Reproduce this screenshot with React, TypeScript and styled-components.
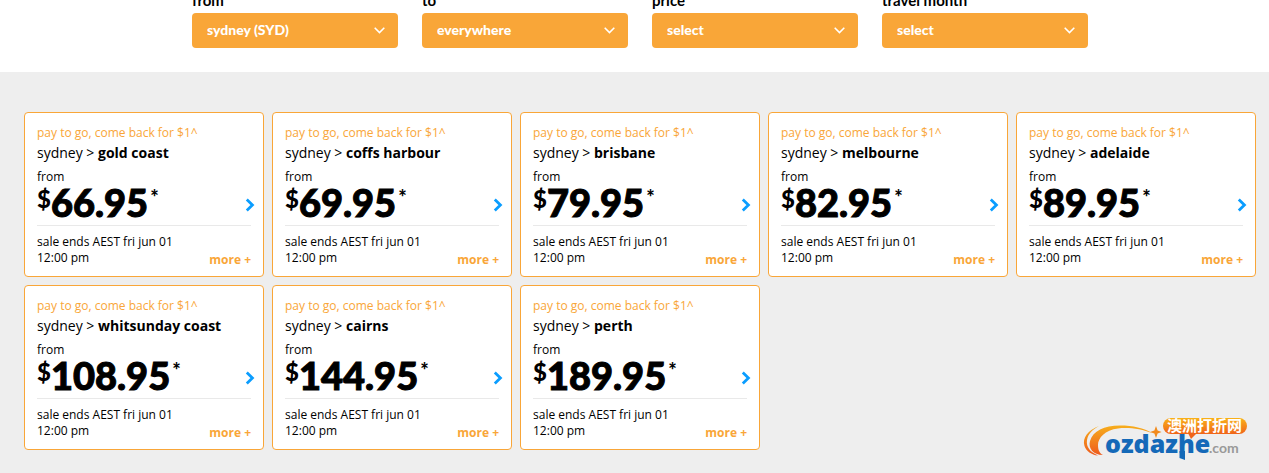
import React from "react";
import styled, { createGlobalStyle } from "styled-components";

const orange = "#f9a638";

const GlobalStyle = createGlobalStyle`
  body {
    margin: 0;
    background: #eeeeee;
    color: #000;
    font-family: "Open Sans", "Noto Sans", sans-serif;
    font-size: 12px;
    line-height: 16px;
  }
  *, *::before, *::after { box-sizing: border-box; }
`;

const Page = styled.div`
  position: relative;
  min-height: 100vh;
`;

const FilterBar = styled.form`
  background: #fff;
  padding: 0 13px 24px 24px;
`;

const Filters = styled.div`
  display: grid;
  grid-template-columns: repeat(4, 1fr);
  gap: 24px;
  max-width: 896px;
  margin: 0 auto;
`;

const Field = styled.div`
  display: flex;
  flex-direction: column;
  margin-top: -10px;
`;

const FieldLabel = styled.label`
  font: 700 15px/20px Lato, sans-serif;
  padding-bottom: 3px;
`;

const SelectWrap = styled.div`
  position: relative;
`;

const Select = styled.select`
  appearance: none;
  display: block;
  width: 100%;
  height: 35px;
  padding: 0 36px 2px 15px;
  border: 0;
  border-radius: 4px;
  background: ${orange};
  color: #fff;
  font: 900 14px/20px Lato, sans-serif;
`;

const SelectArrow = styled.svg`
  position: absolute;
  top: 14px;
  right: 13px;
  pointer-events: none;
`;

const Deals = styled.main`
  display: grid;
  grid-template-columns: repeat(5, 1fr);
  gap: 8px;
  padding: 40px 13px 23px 24px;
`;

const Card = styled.article`
  background: #fff;
  border: 1px solid ${orange};
  border-radius: 4px;
  padding: 11px 12px 10px;
`;

const Promo = styled.div`
  color: ${orange};
  line-height: 18px;
  margin-bottom: 1px;
`;

const Route = styled.h2`
  margin: 0 0 6px;
  font-size: 14px;
  line-height: 20px;
  font-weight: 400;
`;

const PriceRow = styled.div`
  display: flex;
  align-items: flex-end;
  justify-content: space-between;
  margin-bottom: 6px;
`;

const Price = styled.div`
  display: flex;
  align-items: flex-start;
  font-family: Lato, sans-serif;
  font-size: 38px;
  line-height: 34px;
  font-weight: 900;
  -webkit-text-stroke: 1px #000;
`;

const Currency = styled.span`
  font-size: 24px;
  line-height: 28px;
  -webkit-text-stroke-width: 0;
`;

const Star = styled.span`
  font-size: 20px;
  line-height: 24px;
  padding-left: 2px;
  -webkit-text-stroke-width: 0;
`;

const OpenLink = styled.a`
  display: flex;
  margin: 0 -4px 7px 0;
`;

const CardFooter = styled.div`
  display: flex;
  align-items: flex-end;
  justify-content: space-between;
  border-top: 1px solid #e9e9e9;
  padding-top: 8px;
`;

const MoreButton = styled.button`
  border: 0;
  padding: 0;
  background: none;
  color: ${orange};
  font: 700 12px/12px "Open Sans", sans-serif;
  white-space: nowrap;
`;

const Watermark = styled.svg`
  position: absolute;
  right: 21px;
  bottom: 9px;
`;

const filters = [
  { id: "from", label: "from", value: "sydney (SYD)" },
  { id: "to", label: "to", value: "everywhere" },
  { id: "price", label: "price", value: "select" },
  { id: "month", label: "travel month", value: "select" },
];

const deals = [
  { to: "gold coast", price: "66.95" },
  { to: "coffs harbour", price: "69.95" },
  { to: "brisbane", price: "79.95" },
  { to: "melbourne", price: "82.95" },
  { to: "adelaide", price: "89.95" },
  { to: "whitsunday coast", price: "108.95" },
  { to: "cairns", price: "144.95" },
  { to: "perth", price: "189.95" },
];

function DealCard({ to, price }: { to: string; price: string }) {
  return (
    <Card>
      <Promo>pay to go, come back for $1^</Promo>
      <Route>
        sydney &gt; <b>{to}</b>
      </Route>
      <div>from</div>
      <PriceRow>
        <Price>
          <Currency>$</Currency>
          {price}
          <Star>*</Star>
        </Price>
        <OpenLink href="#" aria-label={`sydney to ${to}`}>
          <svg width="10" height="14" viewBox="0 0 10 14" fill="none" stroke="#0a9dff" strokeWidth="2.8">
            <path d="M1.8 1.6 7.4 7 1.8 12.4" />
          </svg>
        </OpenLink>
      </PriceRow>
      <CardFooter>
        <div>
          sale ends AEST fri jun 01
          <br />
          12:00 pm
        </div>
        <MoreButton type="button">more +</MoreButton>
      </CardFooter>
    </Card>
  );
}

function Logo() {
  return (
    <Watermark width="168" height="50" viewBox="0 0 168 50" role="img" aria-label="ozdazhe.com">
      <defs>
        <linearGradient id="swoosh" x1="0" y1="0" x2="0" y2="1">
          <stop offset="0" stopColor="#f7ae1c" />
          <stop offset="1" stopColor="#ee5a1c" />
        </linearGradient>
        <linearGradient id="badge" x1="0" y1="0" x2="0" y2="1">
          <stop offset="0" stopColor="#f9b218" />
          <stop offset="1" stopColor="#f0641a" />
        </linearGradient>
      </defs>
      <path fill="url(#swoosh)" d="M72 19C62 15 48 13 38 14.500 25 16 18 24 18 31c0 4 1 8 5 10C13 41 8 34 10 27 13 17 24 11.500 40 11.500 53 11.500 64 14 72 19z" />
      <path fill="url(#swoosh)" d="M19 12C8 16 2 24 4.500 32c1.500 5 7 9 13.500 9.500C10 38 6 33 7 26 8 20 12 16 19 12z" />
      <path fill="#f28a1c" d="m76 12 1.600 4.400 4 1.600-4 1.600L76 24l-1.600-4.400-4.400-1.600 4.400-1.600z" />
      <rect x="83" y="4" width="84" height="16" rx="8" fill="url(#badge)" />
      <path fill="#f0641a" d="M108 19h9l-6 6z" />
      <text x="87" y="17" fill="#fff" fontSize="15" fontWeight="700" fontFamily='"Noto Sans CJK SC", sans-serif'>澳洲打折网</text>
      <text x="25" y="39" fill="#1469b8" fontSize="25" fontWeight="800" fontFamily='"Open Sans", sans-serif'>ozdazhe</text>
      <path fill="#1469b8" d="M99.500 37h5.500v9l-5.500-2z" />
      <text x="129" y="39" fill="#999" fontSize="14" fontWeight="700" fontFamily="Lato, sans-serif">.com</text>
    </Watermark>
  );
}

export default function App() {
  return (
    <Page>
      <GlobalStyle />
      <FilterBar>
        <Filters>
          {filters.map((f) => (
            <Field key={f.id}>
              <FieldLabel htmlFor={f.id}>{f.label}</FieldLabel>
              <SelectWrap>
                <Select id={f.id}>
                  <option>{f.value}</option>
                </Select>
                <SelectArrow width="11" height="7" viewBox="0 0 11 7" fill="none" stroke="#fff" strokeWidth="1.6">
                  <path d="M0.7 0.7 5.5 5.5 10.3 0.7" />
                </SelectArrow>
              </SelectWrap>
            </Field>
          ))}
        </Filters>
      </FilterBar>
      <Deals>
        {deals.map((d) => (
          <DealCard key={d.to} {...d} />
        ))}
      </Deals>
      <Logo />
    </Page>
  );
}
